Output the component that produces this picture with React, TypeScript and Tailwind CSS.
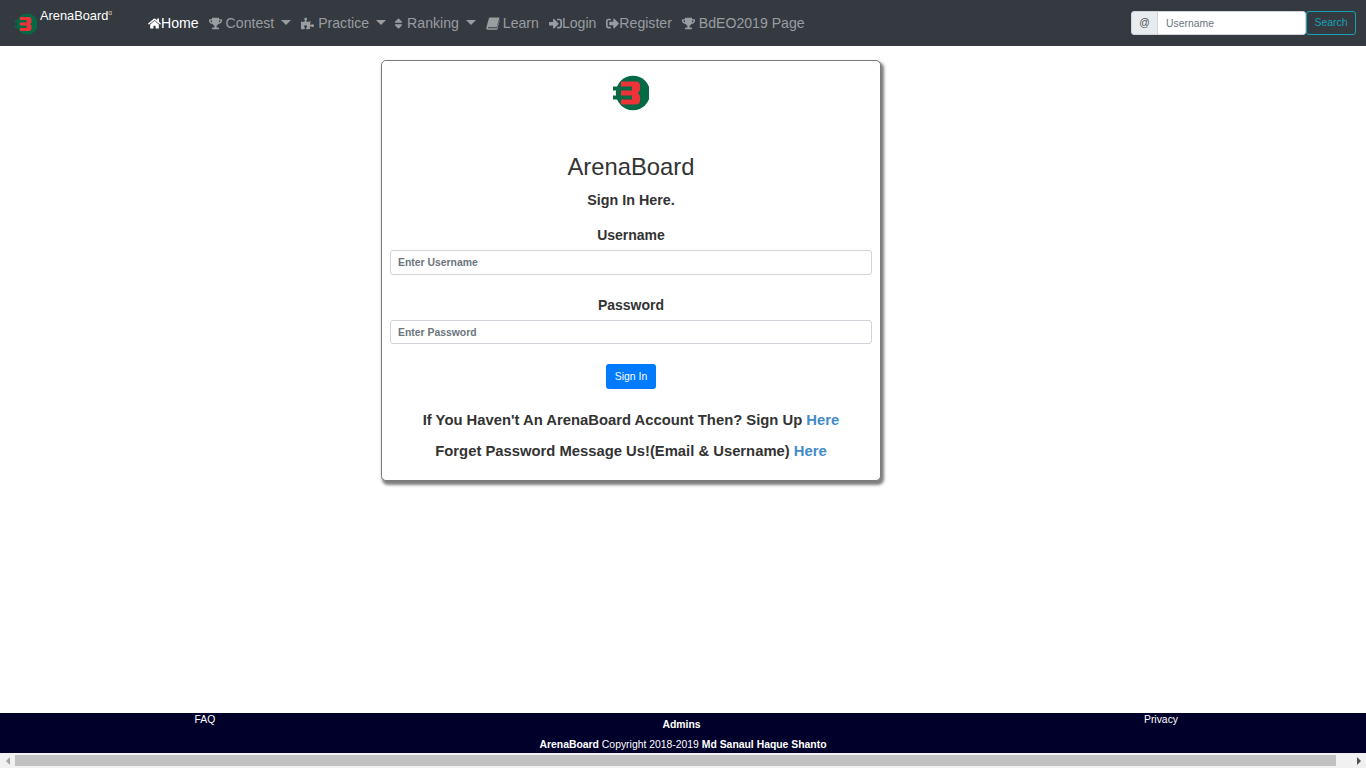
import { FaHome, FaTrophy, FaPuzzlePiece, FaSort, FaSignInAlt, FaSignOutAlt } from 'react-icons/fa'
import type { ReactNode } from 'react'

function Logo({ className }: { className: string }) {
  return (
    <svg viewBox="0 0 36 36" className={className}>
      <circle cx="20" cy="18" r="17.2" fill="#046a45" />
      <path d="M8 6.5H23a4 4 0 0 1 4 4V15l-2 3l2 3v4.5a4 4 0 0 1-4 4H8z" fill="#ee3338" />
      <path d="M0 11.5h19v4H0zM0 20.5h19v4H0z" fill="#046a45" />
    </svg>
  )
}

// slanted book, the icon set has no upright match for it
function BookIcon() {
  return (
    <svg viewBox="0 0 14 13" className="w-[14px] h-[13px] mr-[3px]" fill="currentColor">
      <path d="M4 0.5H13.5L10.8 10.2H2.6C2 10.2 1.8 10.9 2.3 11.2H10.8L13.8 2V3L11.3 12.2C11.2 12.6 11 12.8 10.6 12.8H2C0.8 12.8 0 11.6 0.4 10.2L2.9 1.2C3 0.8 3.5 0.5 4 0.5Z" />
    </svg>
  )
}

function NavItem({ icon, label, active, caret }: { icon: ReactNode; label: string; active?: boolean; caret?: boolean }) {
  return (
    <a className={`flex items-center whitespace-nowrap ${active ? 'text-white' : 'text-[#9a9da0]'}`}>
      {icon}
      <span>{label}</span>
      {caret && <span className="ml-[7px] mb-[3px] w-0 h-0 border-x-[5px] border-x-transparent border-t-[5px] border-t-[#9a9da0]" />}
    </a>
  )
}

function Field({ label, placeholder, gap, height }: { label: string; placeholder: string; gap: string; height: string }) {
  return (
    <div className={gap}>
      <label className="block text-center text-[14px] leading-[20px] font-bold text-[#333]">{label}</label>
      <input
        placeholder={placeholder}
        className={`mt-[5px] block w-full ${height} px-[7px] border border-[#ced4da] rounded-[3px] text-[10.4px] font-bold text-[#495057] placeholder:text-[#6c757d] outline-none`}
      />
    </div>
  )
}

export default function App() {
  return (
    <div className="h-screen flex flex-col overflow-hidden bg-white font-['Liberation_Sans',Arial,sans-serif]">
      <nav className="h-[46px] shrink-0 bg-[#343a40] flex items-center pl-[15px] pr-[10px]">
        <a className="flex items-start w-[133px] shrink-0 text-white text-[12.8px]">
          <Logo className="w-[22px] h-[22px] mt-[2px]" />
          <span className="ml-[3px] -mt-[5px] leading-[20px]">ArenaBoard</span>
          <span className="-mt-[3px] text-[6.5px] leading-[10px] text-[#e0c9a0]">α</span>
        </a>
        <div className="flex items-center gap-[10px] pt-[2px] text-[14.1px]">
          <NavItem active icon={<FaHome className="w-[13px] h-[13px]" />} label="Home" />
          <NavItem icon={<FaTrophy className="w-[13px] h-[13px] mr-[4px]" />} label="Contest" caret />
          <NavItem icon={<FaPuzzlePiece className="w-[13px] h-[13px] mr-[4px]" />} label="Practice" caret />
          <NavItem icon={<FaSort className="w-[9px] h-[13px] -ml-[2px] mr-[4px]" />} label="Ranking" caret />
          <NavItem icon={<BookIcon />} label="Learn" />
          <NavItem icon={<FaSignInAlt className="w-[13px] h-[13px]" />} label="Login" />
          <NavItem icon={<FaSignOutAlt className="w-[13px] h-[13px]" />} label="Register" />
          <NavItem icon={<FaTrophy className="w-[13px] h-[13px] mr-[4px]" />} label="BdEO2019 Page" />
        </div>
        <div className="ml-auto flex items-center text-[10.4px]">
          <span className="w-[27px] h-[24px] flex items-center justify-center bg-[#e9ecef] border border-[#ced4da] rounded-l-[3px] text-[#495057]">@</span>
          <input placeholder="Username" className="w-[149px] h-[24px] -ml-px px-[8px] bg-white border border-[#ced4da] rounded-r-[3px] text-[#495057] placeholder:text-[#6c757d] outline-none" />
          <button className="w-[50px] h-[24px] border border-[#17a2b8] rounded-[3px] text-[#17a2b8]">Search</button>
        </div>
      </nav>

      <main className="flex-1 min-h-0 pl-[381px] pt-[14px]">
        <div className="w-[500px] h-[421px] bg-white border border-[#7b7b7b] rounded-[5px] shadow-[2px_3px_3px_1px_#7f7f7f] px-[8px] pt-[14px]">
          <div className="flex justify-center">
            <Logo className="w-[36px] h-[36px]" />
          </div>
          <h1 className="mt-[41px] text-center text-[23.8px] leading-[29px] text-[#333]">ArenaBoard</h1>
          <p className="mt-[9px] text-center text-[14.3px] leading-[20px] font-bold text-[#333]">Sign In Here.</p>
          <Field gap="mt-[15px]" height="h-[25px]" label="Username" placeholder="Enter Username" />
          <Field gap="mt-[20px]" height="h-[24px]" label="Password" placeholder="Enter Password" />
          <div className="mt-[20px] flex justify-center">
            <button className="w-[50px] h-[25px] bg-[#007bff] rounded-[3px] text-white text-[10.4px]">Sign In</button>
          </div>
          <p className="mt-[20px] text-center text-[14.8px] leading-[22px] font-bold text-[#333]">
            If You Haven't An ArenaBoard Account Then? Sign Up <a className="text-[#428bca]">Here</a>
          </p>
          <p className="mt-[9px] text-center text-[14.8px] leading-[22px] font-bold text-[#333]">
            Forget Password Message Us!(Email &amp; Username) <a className="text-[#428bca]">Here</a>
          </p>
        </div>
      </main>

      <footer className="h-[40px] shrink-0 bg-[#00002a] text-white text-[10.4px] grid grid-cols-[410px_1fr_410px]">
        <div className="text-center pt-[1px] leading-[12px]">FAQ</div>
        <div className="text-center">
          <div className="pt-[6px] pr-[3px] leading-[12px] font-bold">Admins</div>
          <div className="mt-[8px] leading-[12px]">
            <b>ArenaBoard</b> Copyright 2018-2019 <b>Md Sanaul Haque Shanto</b>
          </div>
        </div>
        <div className="text-center pt-[1px] leading-[12px]">Privacy</div>
      </footer>

      <div className="h-[15px] shrink-0 bg-[#f1f1f1] flex items-center">
        <span className="w-[15px] flex justify-center">
          <span className="w-0 h-0 border-y-[4px] border-y-transparent border-r-[4px] border-r-[#a3a3a3]" />
        </span>
        <div className="flex-1 h-[11px] bg-[#c1c1c1]" />
        <span className="w-[15px] ml-[15px] flex justify-center">
          <span className="w-0 h-0 border-y-[4px] border-y-transparent border-l-[4px] border-l-[#505050]" />
        </span>
      </div>
    </div>
  )
}
